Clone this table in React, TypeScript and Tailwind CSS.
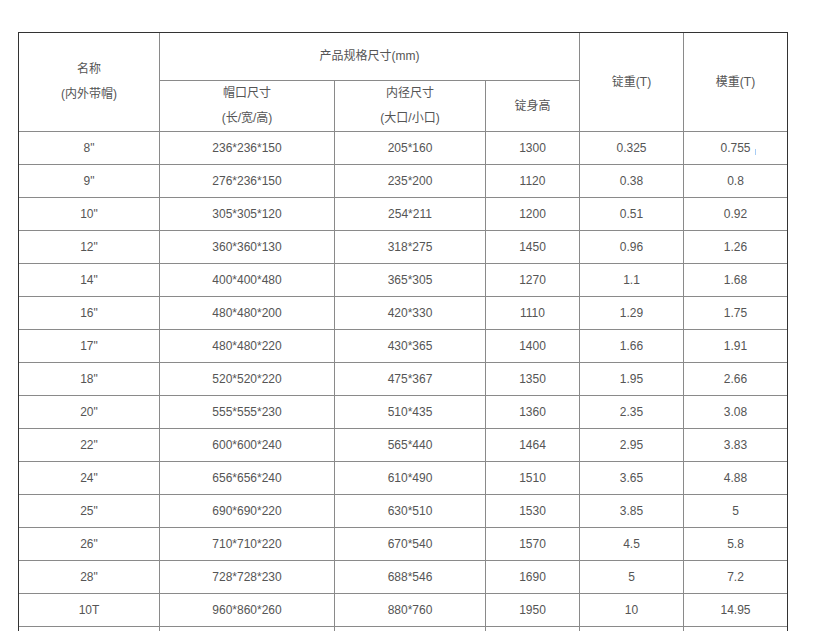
import React from "react";

const rows: string[][] = [
  ['8"', "236*236*150", "205*160", "1300", "0.325", "0.755"],
  ['9"', "276*236*150", "235*200", "1120", "0.38", "0.8"],
  ['10"', "305*305*120", "254*211", "1200", "0.51", "0.92"],
  ['12"', "360*360*130", "318*275", "1450", "0.96", "1.26"],
  ['14"', "400*400*480", "365*305", "1270", "1.1", "1.68"],
  ['16"', "480*480*200", "420*330", "1110", "1.29", "1.75"],
  ['17"', "480*480*220", "430*365", "1400", "1.66", "1.91"],
  ['18"', "520*520*220", "475*367", "1350", "1.95", "2.66"],
  ['20"', "555*555*230", "510*435", "1360", "2.35", "3.08"],
  ['22"', "600*600*240", "565*440", "1464", "2.95", "3.83"],
  ['24"', "656*656*240", "610*490", "1510", "3.65", "4.88"],
  ['25"', "690*690*220", "630*510", "1530", "3.85", "5"],
  ['26"', "710*710*220", "670*540", "1570", "4.5", "5.8"],
  ['28"', "728*728*230", "688*546", "1690", "5", "7.2"],
  ["10T", "960*860*260", "880*760", "1950", "10", "14.95"],
  ["", "", "", "", "", ""],
];

const cell = "flex flex-col items-center justify-center border-[#8a8a8a] text-center";

export default function App() {
  return (
    <div className="min-h-screen bg-white pl-[18px] pt-[32px] text-[12px] leading-[25px] text-[#555] [font-family:'Liberation_Sans','Noto_Sans_CJK_SC',sans-serif]">
      <div className="grid w-[770px] grid-cols-[141px_175px_151px_94px_104px_103px] grid-rows-[48px_51px] auto-rows-[33px] border border-[#333]">
        <div className={`${cell} row-span-2 border-r border-b`}>
          <span>名称</span>
          <span>(内外带帽)</span>
        </div>
        <div className={`${cell} col-span-3 border-r border-b`}>产品规格尺寸(mm)</div>
        <div className={`${cell} row-span-2 border-r border-b`}>锭重(T)</div>
        <div className={`${cell} row-span-2 border-b`}>模重(T)</div>
        <div className={`${cell} border-r border-b`}>
          <span>帽口尺寸</span>
          <span>(长/宽/高)</span>
        </div>
        <div className={`${cell} border-r border-b`}>
          <span>内径尺寸</span>
          <span>(大口/小口)</span>
        </div>
        <div className={`${cell} border-r border-b`}>锭身高</div>
        {rows.map((r, i) =>
          r.map((v, j) => (
            <div
              key={`${i}-${j}`}
              className={`${cell} border-b ${j < 5 ? "border-r" : ""}`}
            >
              {i === 0 && j === 5 ? (
                <span className="relative">
                  {v}
                  <span className="absolute left-[calc(100%+4px)] top-[13px] h-[6px] w-px bg-[#a8cdf5]" />
                </span>
              ) : (
                v
              )}
            </div>
          ))
        )}
      </div>
    </div>
  );
}
